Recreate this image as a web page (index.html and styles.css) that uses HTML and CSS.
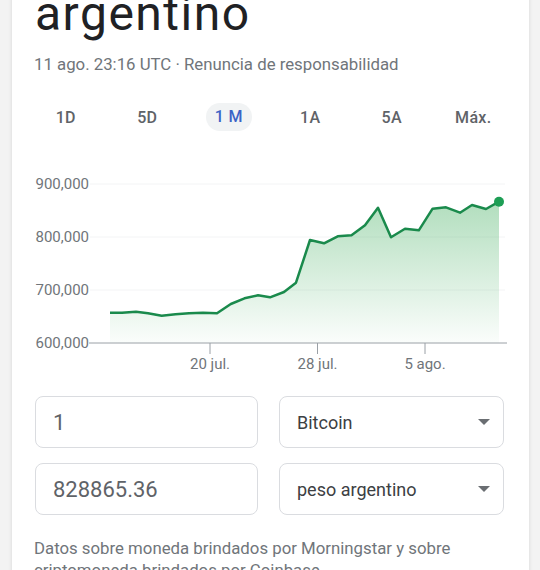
FILE: index.html
```html
<!DOCTYPE html>
<html lang="es">
<head>
<meta charset="utf-8">
<link rel="stylesheet" href="styles.css">
</head>
<body>
<div class="card">
  <div class="title">argentino</div>
  <div class="meta">11 ago. 23:16 UTC · Renuncia de responsabilidad</div>
  <div class="tabs">
    <span class="tab">1D</span>
    <span class="tab">5D</span>
    <span class="tab active">1 M</span>
    <span class="tab">1A</span>
    <span class="tab">5A</span>
    <span class="tab">Máx.</span>
  </div>
  <svg class="chart" width="517" height="205" viewBox="0 0 517 205">
    <defs>
      <linearGradient id="fill" x1="0" y1="0" x2="0" y2="1">
        <stop offset="0" stop-color="#34a853" stop-opacity="0.38"/>
        <stop offset="1" stop-color="#34a853" stop-opacity="0.02"/>
      </linearGradient>
    </defs>
    <g class="grid">
      <line x1="78" y1="14" x2="493" y2="14"/>
      <line x1="78" y1="67" x2="493" y2="67"/>
      <line x1="78" y1="120" x2="493" y2="120"/>
    </g>
    <g class="ylab">
      <text x="77" y="19">900,000</text>
      <text x="77" y="72">800,000</text>
      <text x="77" y="125">700,000</text>
      <text x="77" y="178">600,000</text>
    </g>
    <path class="area" d="M98,142.7 L110,142.7 L124,141.7 L136,143.3 L149.7,145.7 L163.5,144.3 L177,143.3 L191,142.7 L205,143.3 L218.8,134 L232.5,128.3 L246,125.3 L258,127.3 L272,122 L284,112.7 L298,70 L312,73.3 L325.7,66.3 L339.5,65.3 L353,55.3 L366,37.7 L379,67.3 L393,58.7 L406.8,60.3 L420.6,38.7 L434,37.3 L448,42.7 L460,35 L474,39 L487,31.7 L487,173 L98,173 Z"/>
    <polyline class="line" points="98,142.7 110,142.7 124,141.7 136,143.3 149.7,145.7 163.5,144.3 177,143.3 191,142.7 205,143.3 218.8,134 232.5,128.3 246,125.3 258,127.3 272,122 284,112.7 298,70 312,73.3 325.7,66.3 339.5,65.3 353,55.3 366,37.7 379,67.3 393,58.7 406.8,60.3 420.6,38.7 434,37.3 448,42.7 460,35 474,39 487,31.7"/>
    <circle class="dot" cx="487" cy="31.7" r="5"/>
    <g class="axis">
      <line x1="77" y1="173" x2="495" y2="173"/>
      <line x1="198" y1="173" x2="198" y2="184"/>
      <line x1="305.5" y1="173" x2="305.5" y2="184"/>
      <line x1="413" y1="173" x2="413" y2="184"/>
    </g>
    <g class="xlab">
      <text x="198" y="199">20 jul.</text>
      <text x="305.5" y="199">28 jul.</text>
      <text x="413" y="199">5 ago.</text>
    </g>
  </svg>
  <div class="converter">
    <div class="field"><span class="num">1</span></div>
    <div class="field select"><span>Bitcoin</span><span class="arrow"></span></div>
    <div class="field"><span class="num">828865.36</span></div>
    <div class="field select"><span>peso argentino</span><span class="arrow"></span></div>
  </div>
  <p class="note">Datos sobre moneda brindados por Morningstar y sobre criptomoneda brindados por Coinbase</p>
</div>
</body>
</html>
```
FILE: styles.css
```css
html, body {
  margin: 0;
  padding: 0;
  background: #f3f3f3;
  overflow: hidden;
}
body {
  font-family: Roboto, "Liberation Sans", Arial, sans-serif;
  color: #202124;
}
.card {
  background: #fff;
  margin: -12px 11px 0 12px;
  padding: 0 23px 20px 23px;
  box-shadow: 0 0 4px rgba(0,0,0,0.12);
}
.title {
  font-size: 48px;
  line-height: 52px;
  color: #202124;
  letter-spacing: 1.5px;
}
.meta {
  margin-top: 14px;
  font-size: 16.8px;
  line-height: 20px;
  color: #70757a;
  margin-left: -1px;
}
.tabs {
  display: grid;
  grid-template-columns: repeat(6, 81.5px);
  margin: 28px 0 0 -10px;
  height: 32px;
  align-items: center;
  justify-items: center;
}
.tab {
  font-size: 16px;
  font-weight: 500;
  color: #5f6368;
  line-height: 28px;
  padding: 0 9px;
  border-radius: 14px;
  letter-spacing: 0.3px;
}
.tab.active {
  color: #3c63c6;
  background: #f1f3f4;
  padding: 0 9px;
  margin-top: -3px;
}
.chart {
  display: block;
  margin: 36px 0 0 -23px;
}
.grid line {
  stroke: #f3f4f5;
  stroke-width: 1;
}
.ylab text {
  font-family: Roboto, "Liberation Sans", sans-serif;
  font-size: 15px;
  fill: #70757a;
  text-anchor: end;
}
.xlab text {
  font-family: Roboto, "Liberation Sans", sans-serif;
  font-size: 15px;
  fill: #70757a;
  text-anchor: middle;
}
.axis line {
  stroke: #9aa0a6;
  stroke-width: 1;
}
.area {
  fill: url(#fill);
}
.line {
  fill: none;
  stroke: #1a8a4c;
  stroke-width: 2.5;
  stroke-linejoin: round;
}
.dot {
  fill: #1e9e55;
}
.converter {
  display: grid;
  grid-template-columns: 223px 225px;
  column-gap: 21px;
  row-gap: 15px;
  margin-top: 21px;
}
.field {
  height: 50px;
  border: 1px solid #dadce0;
  border-radius: 8px;
  display: flex;
  align-items: center;
  padding: 0 13px 0 17px;
  font-size: 18px;
  color: #3c4043;
}
.field .num {
  font-size: 22px;
  color: #5f6368;
}
.field.select {
  justify-content: space-between;
}
.arrow {
  width: 0;
  height: 0;
  border-left: 6px solid transparent;
  border-right: 6px solid transparent;
  border-top: 6px solid #6a6e72;
}
.note {
  margin: 22px 0 0 -1px;
  font-size: 16.8px;
  line-height: 22px;
  color: #70757a;
}
```
